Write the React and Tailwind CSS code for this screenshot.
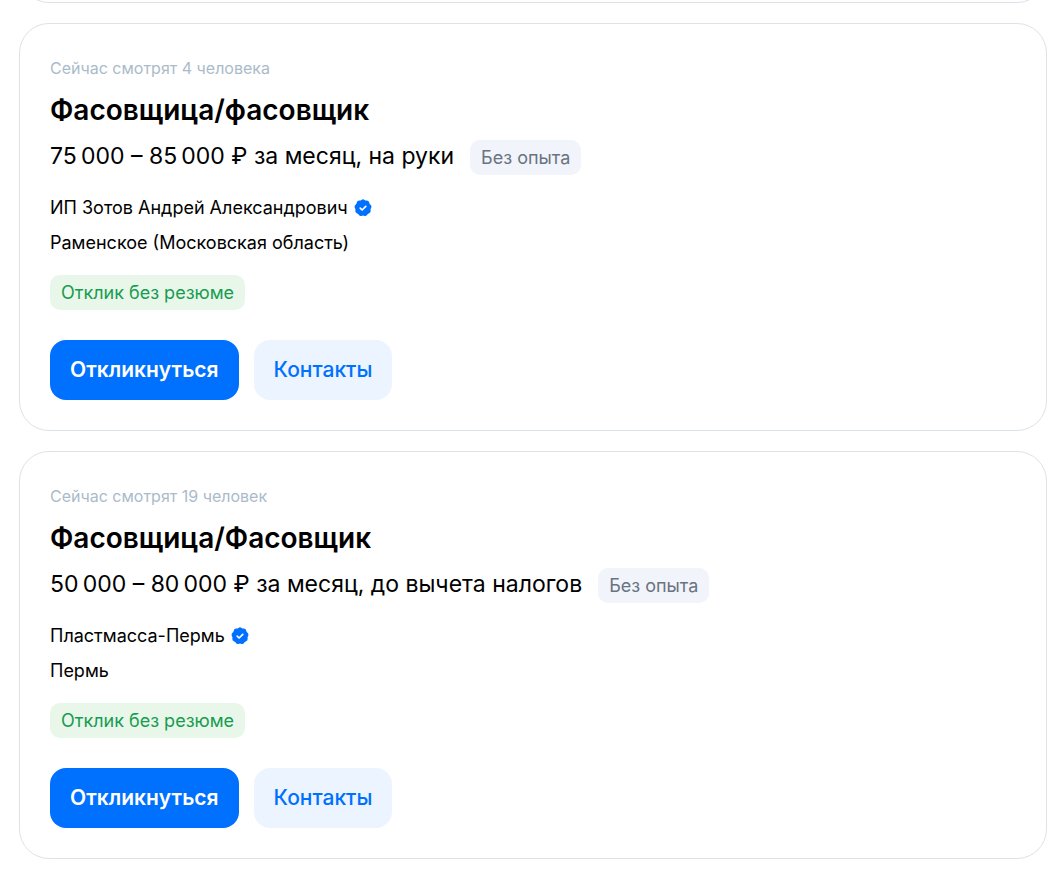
import React from 'react';

const VACANCIES = [
  {
    id: 1,
    watching: 'Сейчас смотрят 4 человека',
    title: 'Фасовщица/фасовщик',
    salary: '75\u2009000 – 85\u2009000 ₽ за месяц, на руки',
    experience: 'Без опыта',
    company: 'ИП Зотов Андрей Александрович',
    city: 'Раменское (Московская область)',
    label: 'Отклик без резюме'
  },
  {
    id: 2,
    watching: 'Сейчас смотрят 19 человек',
    title: 'Фасовщица/Фасовщик',
    salary: '50\u2009000 – 80\u2009000 ₽ за месяц, до вычета налогов',
    experience: 'Без опыта',
    company: 'Пластмасса-Пермь',
    city: 'Пермь',
    label: 'Отклик без резюме'
  }
];

function VerifiedIcon() {
  return (
    <svg className="h-[18px] w-[18px] shrink-0" viewBox="0 0 18 18" aria-hidden="true">
      <path
        d="M7.4 1 Q9 -0.6 10.6 1 Q11.4 1.6 12.4 1.5 Q14.9 1.4 15.3 3.8 Q15.4 4.9 16.2 5.6 Q18.2 7.2 17 9.3 Q16.4 10.2 16.6 11.2 Q17 13.6 14.8 14.4 Q13.8 14.8 13.2 15.7 Q12 17.7 9.9 16.8 Q9 16.4 8.1 16.8 Q6 17.7 4.8 15.7 Q4.2 14.8 3.2 14.4 Q1 13.6 1.4 11.2 Q1.6 10.2 1 9.3 Q-0.2 7.2 1.8 5.6 Q2.6 4.9 2.7 3.8 Q3.1 1.4 5.6 1.5 Q6.6 1.6 7.4 1 Z"
        fill="#0070ff"
      />
      <path
        d="M6.2 9.2 L8.1 11 L11.8 7.4"
        fill="none"
        stroke="#fff"
        strokeWidth="1.7"
        strokeLinecap="round"
        strokeLinejoin="round"
      />
    </svg>
  );
}

function VacancyCard({ vacancy }) {
  return (
    <article className="rounded-[30px] border border-[#dce3e9] bg-white px-[30px] pt-[34px] pb-[30px]">
      <p className="text-[16px] leading-5 text-[#aabbca]">{vacancy.watching}</p>

      <h2 className="mt-3.5 text-[28px] leading-9 font-semibold">
        <a href="#vacancy">{vacancy.title}</a>
      </h2>

      <div className="mt-3 flex flex-wrap items-start gap-4">
        <span className="text-[23px] leading-8">{vacancy.salary}</span>
        <span className="rounded-[10px] bg-[#f1f4fa] px-[11px] text-[18px] leading-[35px] text-[#6a7381]">
          {vacancy.experience}
        </span>
      </div>

      <div className="mt-[21px] flex items-center gap-1.5 text-[18px] leading-6">
        <a href="#company">{vacancy.company}</a>
        <VerifiedIcon />
      </div>
      <p className="mt-[11px] text-[18px] leading-6">{vacancy.city}</p>

      <div className="mt-5 flex">
        <span className="rounded-[10px] bg-[#e8f7ea] px-[11px] text-[18px] leading-[35px] text-[#179c50]">
          {vacancy.label}
        </span>
      </div>

      <div className="mt-[30px] flex gap-[15px]">
        <button type="button" className="h-[60px] rounded-2xl bg-[#0070ff] px-5 text-[21px] font-semibold text-white">
          Откликнуться
        </button>
        <button type="button" className="h-[60px] rounded-2xl bg-[#ecf5ff] px-5 text-[21px] font-medium text-[#0070ff]">
          Контакты
        </button>
      </div>
    </article>
  );
}

export default function App() {
  return (
    <main className="min-h-screen bg-white pr-2.5 pl-[19px] font-['Inter','Liberation_Sans',sans-serif] text-black">
      {/* Bottom edge of the card scrolled out above */}
      <div className="flex h-[3px] items-end overflow-hidden">
        <div className="h-20 w-full shrink-0 rounded-[30px] border border-[#dce3e9]" />
      </div>

      <div className="mt-5 flex flex-col gap-5">
        {VACANCIES.map((vacancy) => (
          <VacancyCard key={vacancy.id} vacancy={vacancy} />
        ))}
      </div>
    </main>
  );
}
